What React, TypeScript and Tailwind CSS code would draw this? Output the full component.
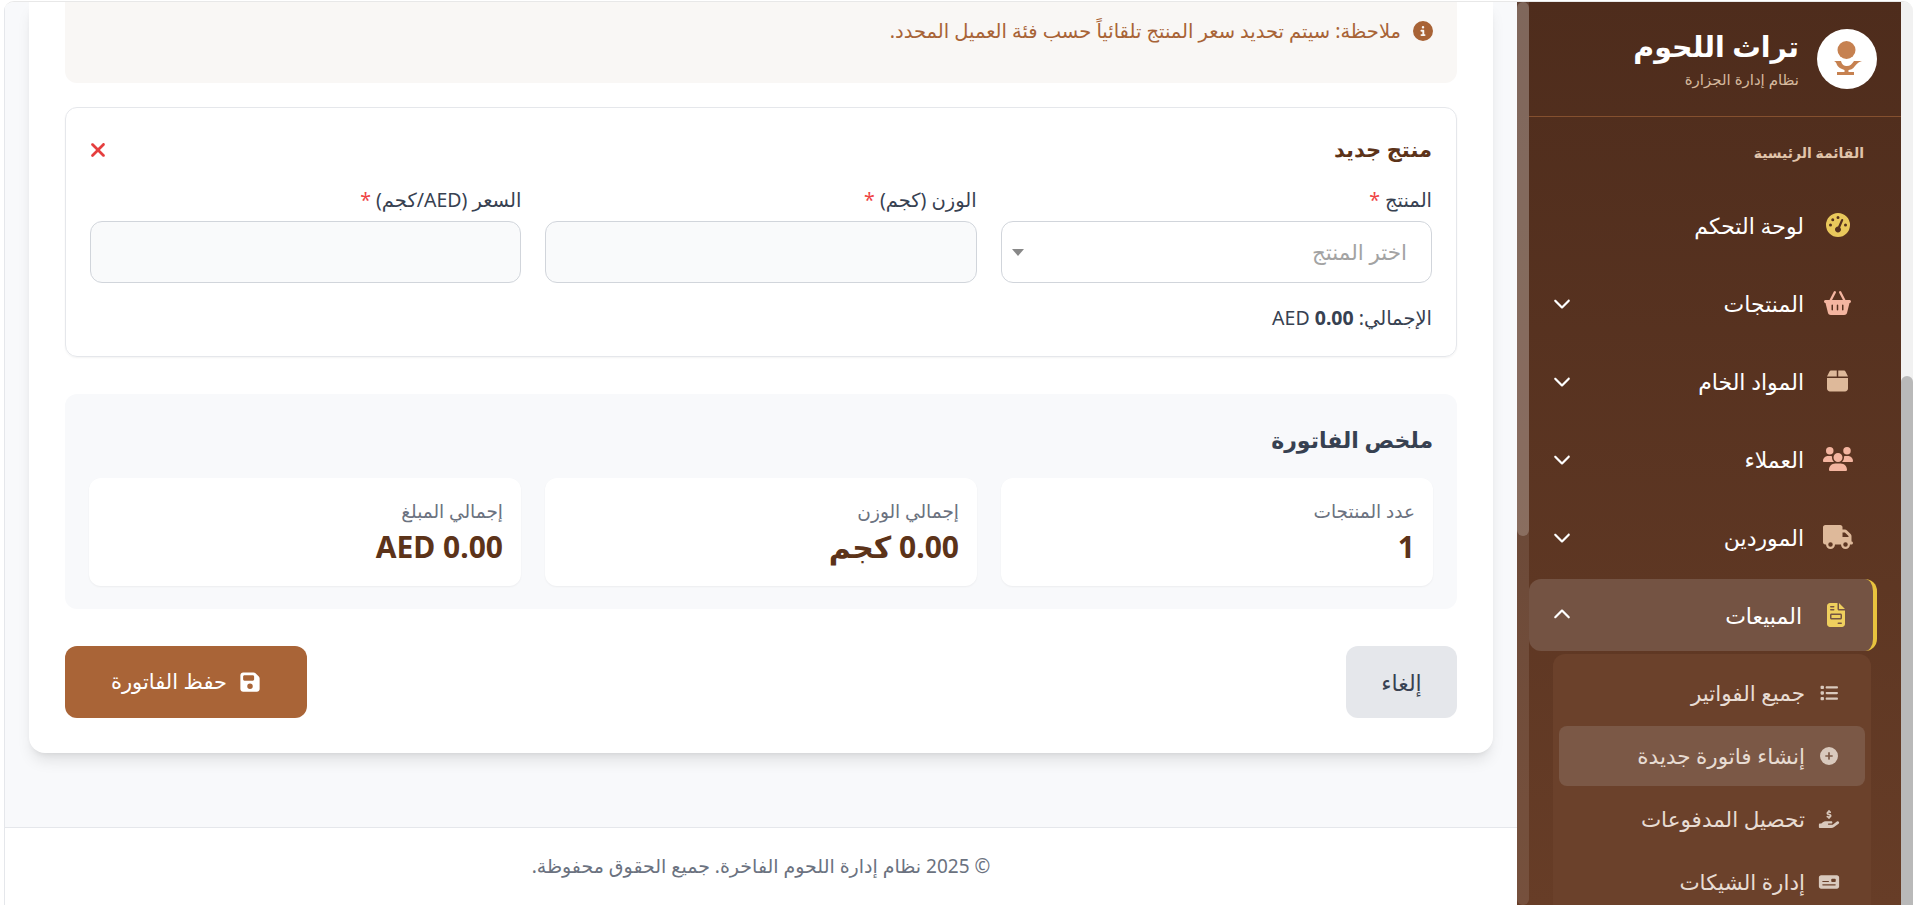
import {
  FaBasketShopping,
  FaBox,
  FaChevronDown,
  FaChevronUp,
  FaCircleInfo,
  FaCirclePlus,
  FaFileInvoice,
  FaFloppyDisk,
  FaGaugeHigh,
  FaHandHoldingDollar,
  FaList,
  FaMoneyCheck,
  FaTruck,
  FaUsers,
  FaXmark,
} from "react-icons/fa6";
import type { IconType } from "react-icons";

const fontStack = { fontFamily: '"Noto Sans", "DejaVu Sans", sans-serif' };

const navItems: { label: string; icon: IconType; iconSize: string; color: string; chevron: boolean }[] = [
  { label: "لوحة التحكم", icon: FaGaugeHigh, iconSize: "w-6 h-6", color: "text-[#e9c85c]", chevron: false },
  { label: "المنتجات", icon: FaBasketShopping, iconSize: "w-[27px] h-6", color: "text-[#f4b5a0]", chevron: true },
  { label: "المواد الخام", icon: FaBox, iconSize: "w-[21px] h-6", color: "text-[#deb99a]", chevron: true },
  { label: "العملاء", icon: FaUsers, iconSize: "w-[30px] h-6", color: "text-[#f4b5a0]", chevron: true },
  { label: "الموردين", icon: FaTruck, iconSize: "w-[30px] h-6", color: "text-[#deb99a]", chevron: true },
];

const subItems: { label: string; icon: IconType; iconSize: string; active?: boolean }[] = [
  { label: "جميع الفواتير", icon: FaList, iconSize: "w-[18px] h-[18px]" },
  { label: "إنشاء فاتورة جديدة", icon: FaCirclePlus, iconSize: "w-[18px] h-[18px]", active: true },
  { label: "تحصيل المدفوعات", icon: FaHandHoldingDollar, iconSize: "w-[22px] h-[18px]" },
  { label: "إدارة الشيكات", icon: FaMoneyCheck, iconSize: "w-[22px] h-[18px]" },
];

const summary = [
  { label: "عدد المنتجات", value: "1" },
  { label: "إجمالي الوزن", value: "0.00 كجم" },
  { label: "إجمالي المبلغ", value: "AED 0.00" },
];

function Label({ text }: { text: string }) {
  return (
    <label className="block text-[19.5px] leading-[26px] text-[#374151] mb-2">
      {text} <span className="text-[#ef4444]">*</span>
    </label>
  );
}

function Sidebar() {
  return (
    <aside className="w-[384px] h-full flex shrink-0 bg-gradient-to-b from-[#4e2c1c] to-[#673d27] overflow-hidden">
      <div className="flex-1 min-w-0">
        <div className="h-[115px] border-b border-[#85502f] flex items-center gap-[18px] pr-6">
          <div className="w-[60px] h-[60px] rounded-full bg-white shrink-0">
            <svg width="60" height="60" viewBox="0 0 60 60">
              <circle cx="29.5" cy="21" r="9" fill="#c68150" />
              <path
                d="M17 32 H24 C25 36 27 37 30 37 C33 37 35 35 37 32 H45 C41 33 40 35 38 37 C36 40 33 41 31.5 41 V43 H37 V46 H20 V43 H27.5 V41 C24 40 21 38 20 36 C19.5 34 19 33 17 32 Z"
                fill="#c68150"
              />
            </svg>
          </div>
          <div>
            <div className="text-[28.5px] leading-[40px] font-bold text-white">تراث اللحوم</div>
            <div className="text-[15px] leading-[26px] text-[#d6b99d]">نظام إدارة الجزارة</div>
          </div>
        </div>
        <div className="pr-[37px] pt-[26px] pb-[26px] text-[14px] leading-[20px] font-semibold text-[#e0c4aa]">
          القائمة الرئيسية
        </div>
        <nav className="flex flex-col gap-[6px] mr-6">
          {navItems.map((item) => (
            <div key={item.label} className="h-[72px] flex items-center pr-[24px] pl-[24px] text-white">
              <span className="w-[31px] flex justify-center">
                <item.icon className={`${item.iconSize} ${item.color}`} />
              </span>
              <span className="mr-[18px] text-[22px]">{item.label}</span>
              {item.chevron && <FaChevronDown className="mr-auto w-[18px] h-[18px]" />}
            </div>
          ))}
          <div className="h-[72px] flex items-center pr-[25px] pl-[24px] bg-[#745343] rounded-xl border-r-4 border-[#e8c33e] text-white">
            <span className="w-[24px] flex justify-center">
              <FaFileInvoice className="w-[18px] h-6 text-[#efcf5e]" />
            </span>
            <span className="mr-[22px] text-[22px]">المبيعات</span>
            <FaChevronUp className="mr-auto w-[18px] h-[18px]" />
          </div>
        </nav>
        <div className="mt-[3px] mr-[30px] ml-6 bg-[#6b412b] rounded-t-xl pt-[9px] px-[6px] flex flex-col gap-[3px] h-[400px]">
          {subItems.map((s) => (
            <div
              key={s.label}
              className={`h-[60px] flex items-center pr-[24px] rounded-lg text-[21.5px] text-[#e8dcd3] ${s.active ? "bg-[#7b5846]" : ""}`}
            >
              <span className="w-[24px] flex justify-center">
                <s.icon className={`${s.iconSize} text-[#d9c9bd]`} />
              </span>
              <span className="mr-[12px]">{s.label}</span>
            </div>
          ))}
        </div>
      </div>
      {/* sidebar scrollbar, on the left because of rtl */}
      <div className="w-3 h-full bg-white/10 rounded-b-md">
        <div className="h-[534px] rounded-full bg-white/20" />
      </div>
    </aside>
  );
}

export default function App() {
  return (
    <div dir="rtl" style={fontStack} className="w-[1918px] h-[906px] overflow-hidden bg-white pl-[4px] pr-[5px] pt-[1px] pb-[1px]">
      <div className="flex h-full w-full overflow-hidden rounded-t-[10px] border-t border-[#e8e8e8]">
        {/* page scrollbar */}
        <div className="w-3 h-full bg-[#f1f1f1] shrink-0 pt-[374px]">
          <div className="h-[540px] bg-[#b9b9b9] rounded-t-full" />
        </div>
        <Sidebar />
        <main className="flex-1 min-w-0 flex flex-col bg-[#f8f9fb] border-l border-[#e5e7eb]">
          <div className="flex-1 mx-6 min-h-0">
            <div className="bg-white rounded-b-2xl shadow-lg px-9 pb-9 h-[751px]">
              <div className="h-[81px] bg-[#f9f7f5] rounded-b-xl flex items-start pt-[14px] pr-[24px] text-[#a86336] text-[19.5px] leading-[30px]">
                <FaCircleInfo className="w-5 h-5 mt-[5px]" />
                <span className="mr-[12px]">ملاحظة: سيتم تحديد سعر المنتج تلقائياً حسب فئة العميل المحدد.</span>
              </div>
              <div className="mt-6 h-[250px] border border-[#e5e7eb] rounded-xl p-6 shadow-xs">
                <div className="flex items-center justify-between h-[36px] mb-[19px]">
                  <h3 className="text-[21px] font-semibold text-[#5c3319]">منتج جديد</h3>
                  <FaXmark className="w-[22px] h-[22px] -ml-[3px] text-[#e53e3e]" />
                </div>
                <div className="grid grid-cols-3 gap-6">
                  <div>
                    <Label text="المنتج" />
                    <div className="h-[62px] bg-white border border-[#d1d5db] rounded-xl flex items-center justify-between pr-[24px] pl-[10px] text-[21.5px] text-[#a3a3a3]">
                      <span>اختر المنتج</span>
                      <span className="w-0 h-0 border-x-[6px] border-x-transparent border-t-[7px] border-t-[#888]" />
                    </div>
                  </div>
                  <div>
                    <Label text="الوزن (كجم)" />
                    <input className="w-full h-[62px] bg-[#f9fafb] border border-[#d1d5db] rounded-xl" />
                  </div>
                  <div>
                    <Label text="السعر (AED/كجم)" />
                    <input className="w-full h-[62px] bg-[#f9fafb] border border-[#d1d5db] rounded-xl" />
                  </div>
                </div>
                <div className="mt-[21px] text-[19.5px] leading-[28px] text-[#374151]">
                  الإجمالي: <strong className="font-bold">0.00</strong> AED
                </div>
              </div>
              <div className="mt-[37px] h-[215px] bg-[#f8f9fb] rounded-xl p-6">
                <h3 className="text-[22px] leading-[42px] font-semibold text-[#374151] mb-[18px]">ملخص الفاتورة</h3>
                <div className="grid grid-cols-3 gap-6">
                  {summary.map((s) => (
                    <div key={s.label} className="h-[108px] bg-white rounded-xl shadow-xs px-[18px] pt-[19px]">
                      <div className="text-[18.5px] leading-[28px] text-[#6b7280]">{s.label}</div>
                      <div className="text-[30px] leading-[44px] font-bold text-[#5c3319]">{s.value}</div>
                    </div>
                  ))}
                </div>
              </div>
              <div className="mt-[37px] flex justify-between">
                <button className="w-[111px] h-[72px] rounded-xl bg-[#e5e7eb] text-[#374151] text-[22px]">إلغاء</button>
                <button className="w-[242px] h-[72px] rounded-xl bg-[#a96437] text-white text-[21px] flex items-center justify-center gap-3">
                  <FaFloppyDisk className="w-[22px] h-[22px]" />
                  حفظ الفاتورة
                </button>
              </div>
            </div>
          </div>
          <footer className="h-[78px] shrink-0 bg-white border-t border-[#e5e7eb] flex items-center justify-center text-[19px] text-[#6b7280]">
            © 2025 نظام إدارة اللحوم الفاخرة. جميع الحقوق محفوظة.
          </footer>
        </main>
      </div>
    </div>
  );
}
